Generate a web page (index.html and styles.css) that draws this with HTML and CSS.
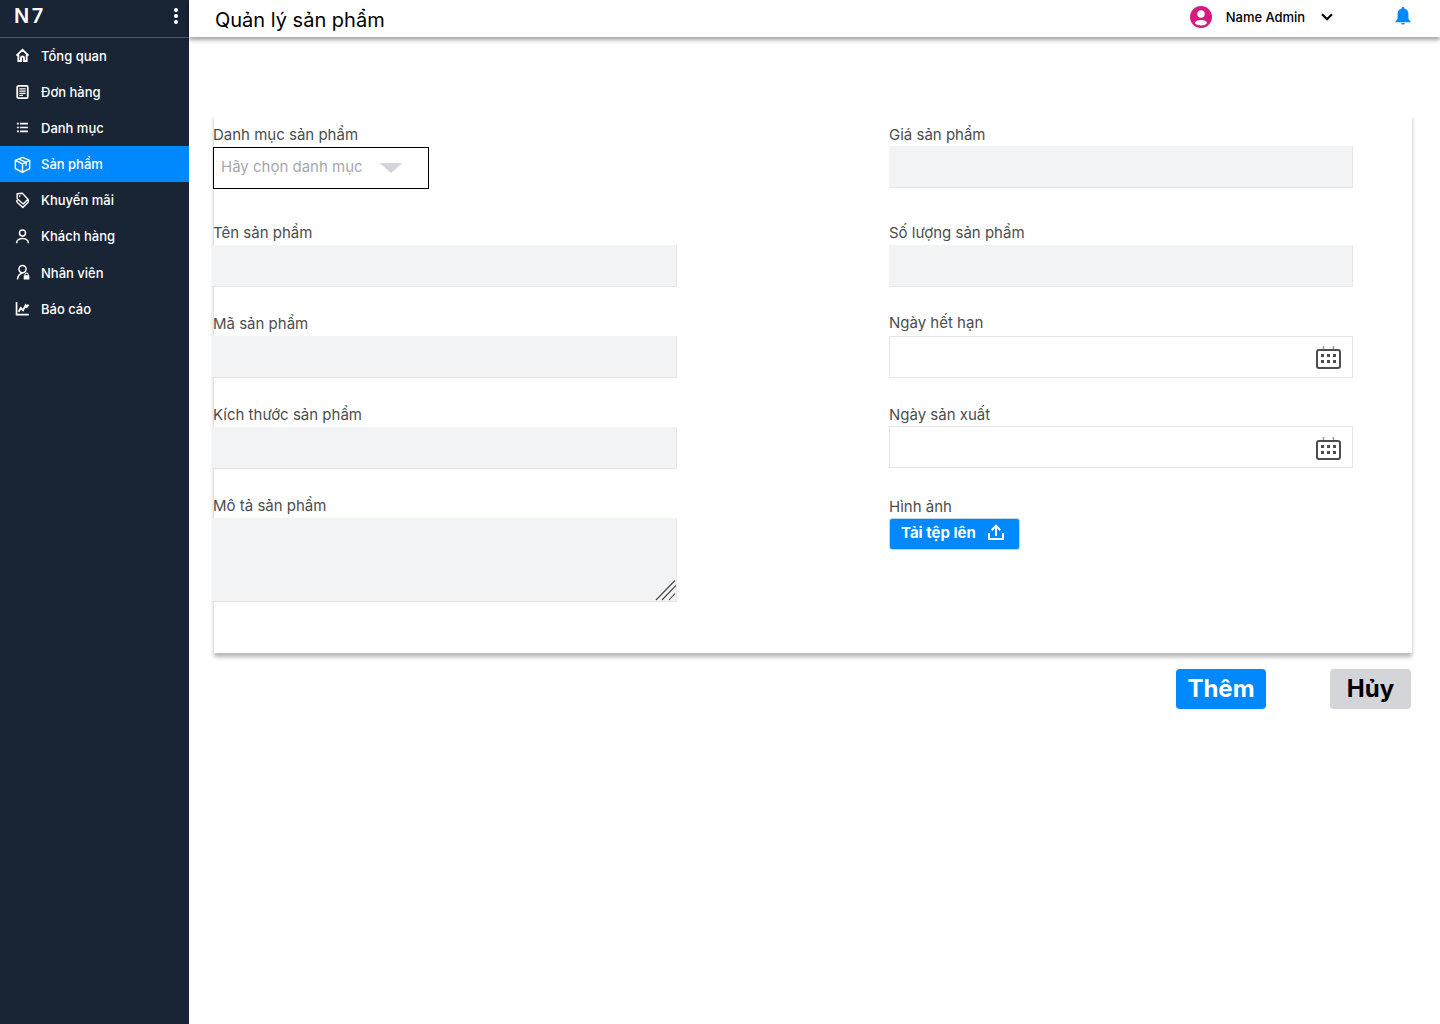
FILE: index.html
```html
<!DOCTYPE html>
<html lang="vi">
<head>
<meta charset="utf-8">
<title>Quản lý sản phẩm</title>
<link rel="stylesheet" href="styles.css">
</head>
<body>
<div class="app">
  <aside class="sidebar">
    <div class="brand">
      <span class="logo">N7</span>
      <svg class="dots" width="6" height="18" viewBox="0 0 6 18" fill="#fff"><circle cx="3" cy="3" r="2.1"/><circle cx="3" cy="9" r="2.1"/><circle cx="3" cy="15" r="2.1"/></svg>
    </div>
    <nav class="nav">
      <a class="nav-item"><svg class="icon" viewBox="0 0 18 18"><path d="M2.6 9.2 9 3.1l6.4 6.1M4.6 8v6.8h2.8v-3.2a1.6 1.6 0 0 1 3.2 0v3.2h2.8V8" stroke-width="2"/></svg>Tổng quan</a>
      <a class="nav-item"><svg class="icon" viewBox="0 0 18 18"><rect x="3.4" y="3" width="11.2" height="13" rx="1.4" stroke-width="1.9"/><path d="M5.6 6.3h6.8M5.6 8.6h6.8M5.6 10.9h6.8M5.6 13.1h4" stroke-width="1.4"/></svg>Đơn hàng</a>
      <a class="nav-item"><svg class="icon" viewBox="0 0 18 18"><path d="M3.1 5h2M3.100 9h2M3.100 13h2M6.300 5h8.400M6.300 9h8.400M6.300 13h8.400" stroke-width="1.8"/></svg>Danh mục</a>
      <a class="nav-item active"><svg class="icon" viewBox="0 0 18 18"><path d="m9 1.500 7.600 3.100v8.800L9 17.200l-7.600-3.800V4.600zM1.400 4.600 9 8.400l7.600-3.800M9 8.400v8.800M5.100 3.200l7.700 3.600v3.400" stroke-width="1.5" stroke-linejoin="round"/></svg>Sản phẩm</a>
      <a class="nav-item"><svg class="icon" viewBox="0 0 18 18"><path d="M3.300 1.800 8.800 1.400l6 6.200-5.100 5.100L3.400 7.100zM3 10.500l6.400 6 5.800-5.800M3 10.500V8.500M15.200 10.700V8.300" stroke-width="1.500" stroke-linejoin="round"/><circle cx="6" cy="4.300" r=".9" fill="#fff" stroke="none"/></svg>Khuyến mãi</a>
      <a class="nav-item"><svg class="icon" viewBox="0 0 18 18"><circle cx="9" cy="5.400" r="3.200" stroke-width="1.600"/><path d="M2.700 16.200C3 9.400 15 9.400 15.300 16.200" stroke-width="1.600"/></svg>Khách hàng</a>
      <a class="nav-item"><svg class="icon" viewBox="0 0 18 18"><circle cx="9" cy="5.400" r="3.800" stroke-width="1.600"/><path d="M3.700 16.300c.2-3.400 2-5.800 5.300-6.800" stroke-width="1.600"/><rect x="10.300" y="12" width="6" height="4.500" rx=".6" fill="#fff" stroke="none"/><path d="M11.600 12.300v-1a1.700 1.700 0 0 1 3.400 0v1" stroke-width="1.100"/></svg>Nhân viên</a>
      <a class="nav-item"><svg class="icon" viewBox="0 0 18 18"><path d="M2.700 2.200v13.200h13" stroke-width="1.800"/><path d="m4.900 12.500 2.300-4 2.300 2.200 2.800-5 1.200 1.700 1.900-2.500" stroke-width="2"/></svg>Báo cáo</a>
    </nav>
  </aside>
  <div class="page">
    <header class="topbar">
      <h1 class="title">Quản lý sản phẩm</h1>
      <div class="account">
        <svg width="22" height="22" viewBox="0 0 22 22"><circle cx="11" cy="11" r="11" fill="#d61a7f"/><circle cx="11" cy="8" r="3.700" fill="#fff"/><path d="M5 17.200C5 12.800 17 12.800 17 17.200 14 20.200 8 20.200 5 17.200z" fill="#fff"/></svg>
        <span class="account-name">Name Admin</span>
        <svg class="chevron" width="12" height="8" viewBox="0 0 12 8" fill="none" stroke="#000" stroke-width="2.200"><path d="m1 1.300 5 5 5-5"/></svg>
      </div>
      <svg class="bell" width="16" height="18" viewBox="0 0 16 18" fill="#08f"><path d="M8 0c.9 0 1.400.6 1.400 1.400 2.600.7 4 2.800 4 5.400v5l2.100 2.600v.8H.5v-.8l2.100-2.600v-5c0-2.600 1.400-4.700 4-5.400C6.600.6 7.100 0 8 0zM6.200 15.900h3.600C9.600 17 9 17.500 8 17.500s-1.600-.5-1.800-1.600z"/></svg>
    </header>
    <main class="content">
      <form class="panel">
        <div class="column">
          <div class="field category">
            <label class="label">Danh mục sản phẩm</label>
            <div class="select"><span>Hãy chọn danh mục</span><svg class="caret" width="24" height="10" viewBox="0 0 24 10"><path d="M.5 0h23L12 10z" fill="#d4d5d8"/></svg></div>
          </div>
          <div class="field"><label class="label">Tên sản phẩm</label><div class="input"></div></div>
          <div class="field"><label class="label">Mã sản phẩm</label><div class="input"></div></div>
          <div class="field"><label class="label">Kích thước sản phẩm</label><div class="input"></div></div>
          <div class="field"><label class="label">Mô tả sản phẩm</label><div class="input textarea"><svg width="21" height="22" viewBox="0 0 21 22" stroke="#444" stroke-width="1.100"><path d="M1 21 20 1.500M7 21 21 6.500M14 21l6-6.500"/></svg></div></div>
        </div>
        <div class="column column-right">
          <div class="field price"><label class="label low">Giá sản phẩm</label><div class="input"></div></div>
          <div class="field"><label class="label">Số lượng sản phẩm</label><div class="input"></div></div>
          <div class="field expiry"><label class="label high">Ngày hết hạn</label><div class="input date"><svg class="calendar" width="26" height="24" viewBox="0 0 26 24"><path d="M7.500 0v4M17.500 0v4" stroke="#999" stroke-width="1.500"/><rect x="1" y="4" width="23" height="18" rx="2" fill="none" stroke="#4d4d4d" stroke-width="2"/><path d="M5 8h3v3H5zM11 8h3v3h-3zM17 8h3v3h-3zM5 14h3v3H5zM11 14h3v3h-3zM17 14h3v3h-3z" fill="#4d4d4d"/></svg></div></div>
          <div class="field made"><label class="label low">Ngày sản xuất</label><div class="input date lower"><svg class="calendar" width="26" height="24" viewBox="0 0 26 24"><path d="M7.500 0v4M17.500 0v4" stroke="#999" stroke-width="1.500"/><rect x="1" y="4" width="23" height="18" rx="2" fill="none" stroke="#4d4d4d" stroke-width="2"/><path d="M5 8h3v3H5zM11 8h3v3h-3zM17 8h3v3h-3zM5 14h3v3H5zM11 14h3v3h-3zM17 14h3v3h-3z" fill="#4d4d4d"/></svg></div></div>
          <div class="field image"><label class="label low">Hình ảnh</label><div class="upload"><span>Tải tệp lên</span><svg width="18" height="18" viewBox="0 0 18 18" fill="none" stroke="#fff" stroke-width="2"><path d="M2 9v6h14V9"/><path d="M9 12V2M4.700 6.200 9 1.600l4.300 4.600" stroke-width="2"/></svg></div></div>
        </div>
      </form>
      <div class="actions">
        <button class="button primary">Thêm</button>
        <button class="button cancel">Hủy</button>
      </div>
    </main>
  </div>
</div>
</body>
</html>
```
FILE: styles.css
```css
* { box-sizing: border-box; }
body { margin: 0; background: #fff; color: #000; font-family: Inter, sans-serif; }
svg { display: block; flex: none; }
.app { display: flex; height: 1024px; overflow: hidden; }
.sidebar { width: 189px; flex: none; background: #192434; color: #fff; }
.brand { display: flex; justify-content: space-between; height: 38px; padding: 7px 10px 0 14px; border-bottom: 1px solid #4b586a; }
.logo { font-size: 20px; line-height: 18px; font-weight: 600; letter-spacing: 2.5px; }
.nav { margin-top: -.6px; }
.nav-item { display: flex; align-items: center; gap: 10px; height: 36.2px; padding-left: 14px; font-size: 13px; font-weight: 450; letter-spacing: 0; }
.icon { width: 17px; height: 17px; fill: none; stroke: #fff; }
.active { background: #08f; }
.page { flex: 1; }
.topbar { display: flex; height: 37px; align-items: flex-start; padding: 0 29px 0 26px; box-shadow: 0 3px 4px rgba(0,0,0,.35); }
.title { flex: 1; margin: 8px 0 0; font-size: 20px; line-height: 24px; font-weight: 430; }
.account { display: flex; align-items: center; margin-top: 6px; }
.account-name { margin: 0 16px 0 14px; font-size: 13px; font-weight: 450; letter-spacing: -.05px; }
.bell { margin: 7px 0 0 62px; }
.content { padding: 77px 28px 0 25px; }
.panel { display: flex; gap: 212px; height: 539px; padding-top: 9px; box-shadow: 0 4px 4px rgba(0,0,0,.28); }
.column { display: flex; flex-direction: column; gap: 25px; width: 465px; margin-left: -2px; }
.column-right { width: 464px; margin: -1px 0 0; }
.category { margin-bottom: 7px; }
.price { margin-bottom: 8px; }
.expiry { margin-bottom: -1px; }
.image { margin-top: 1px; }
.label { display: block; height: 24px; font-size: 15px; line-height: 24px; font-weight: 430; color: #4d4d4d; }
.low { padding-top: 1px; }
.high { line-height: 22px; }
.input { height: 42px; background: #f2f3f5; border: solid #e5e5e5; border-width: 0 1px 1px 0; }
.column:first-child .label { padding-left: 1px; }
.select { display: flex; align-items: center; gap: 17px; width: 216px; height: 42px; margin-left: 1px; padding: 0 0 3px 7px; border: 1px solid #000; background: #fff; font-size: 15px; font-weight: 430; color: #a5a8b0; }
.caret { margin: 2px 0 0 -1px; }
.textarea { display: flex; align-items: flex-end; justify-content: flex-end; height: 84px; }
.date { display: flex; align-items: center; justify-content: flex-end; padding: 2px 10px 0 0; border-width: 1px; background: #fff; }
.lower { padding-top: 4px; }
.upload { display: flex; align-items: center; gap: 11px; width: 131px; height: 32px; padding: 0 0 3px 11px; border: 1px solid #c7d6e6; border-radius: 3px; background: #08f; color: #fff; font-size: 15px; font-weight: 650; }
.actions { display: flex; justify-content: flex-end; gap: 64px; padding: 16px 1px 0 0; }
.button { height: 40px; padding: 0 0 2px; border: 0; border-radius: 4px; font: 650 24px Inter, sans-serif; }
.primary { width: 90px; background: #08f; color: #fff; }
.cancel { width: 81px; background: #d4d5d8; color: #000; }
```
